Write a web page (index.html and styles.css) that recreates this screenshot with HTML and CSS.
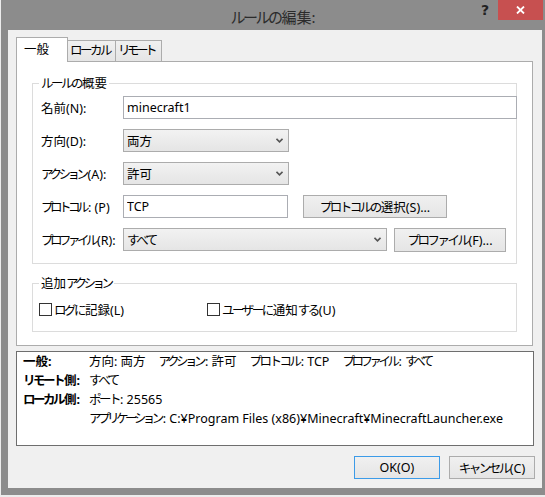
FILE: index.html
```html
<!DOCTYPE html>
<html lang="ja">
<head>
  <meta charset="UTF-8">
  <title>ルールの編集</title>
  <link rel="stylesheet" href="styles.css">
</head>
<body>
  <div class="window">
    <!-- タイトルバー -->
    <div class="titlebar">
      <div></div>
      <div class="title"><span class="k">ルールの</span>編集:</div>
      <div class="caption-buttons">
        <span class="help-btn">?</span>
        <span class="close-btn">
          <svg width="9" height="8" viewBox="0 0 9 8"><path d="M1 0.5 L8 7.5 M8 0.5 L1 7.5" stroke="#fff" stroke-width="1.8"/></svg>
        </span>
      </div>
    </div>

    <div class="client">
      <!-- タブ -->
      <div class="tabs">
        <div class="tab tab-active">一般</div>
        <div class="tab tab-local"><span class="k">ローカル</span></div>
        <div class="tab tab-remote"><span class="kt">リモート</span></div>
      </div>

      <div class="tab-panel">
        <!-- ルールの概要 -->
        <div class="group">
          <span class="group-title"><span class="k">ルールの</span>概要</span>
          <div class="rule-rows">
            <div class="row">
              <span class="row-label">名前(N):</span>
              <input class="field field-name" type="text" value="minecraft1">
            </div>
            <div class="row">
              <span class="row-label">方向(D):</span>
              <div class="combo combo-short">
                <span>両方</span>
                <svg width="7" height="5" viewBox="0 0 7 5"><path d="M0.5 0.8 L3.5 3.8 L6.5 0.8" fill="none" stroke="#555" stroke-width="1.6"/></svg>
              </div>
            </div>
            <div class="row">
              <span class="row-label"><span class="kt">アクション</span>(A):</span>
              <div class="combo combo-short">
                <span>許可</span>
                <svg width="7" height="5" viewBox="0 0 7 5"><path d="M0.5 0.8 L3.5 3.8 L6.5 0.8" fill="none" stroke="#555" stroke-width="1.6"/></svg>
              </div>
            </div>
            <div class="row">
              <span class="row-label"><span class="kt">プロトコル</span>: (P)</span>
              <input class="field field-protocol" type="text" value="TCP">
              <button class="btn btn-protocol"><span class="k">プロトコルの</span>選択(S)...</button>
            </div>
            <div class="row">
              <span class="row-label"><span class="kt">プロファイル</span>(R):</span>
              <div class="combo combo-profile">
                <span class="k">すべて</span>
                <svg width="7" height="5" viewBox="0 0 7 5"><path d="M0.5 0.8 L3.5 3.8 L6.5 0.8" fill="none" stroke="#555" stroke-width="1.6"/></svg>
              </div>
              <button class="btn btn-profile"><span class="k">プロファイル</span>(F)...</button>
            </div>
          </div>
        </div>

        <!-- 追加アクション -->
        <div class="group">
          <span class="group-title">追加<span class="kt">アクション</span></span>
          <div class="checks">
            <label class="check check-log"><span class="check-box"></span><span><span class="k">ログに</span>記録(L)</span></label>
            <label class="check"><span class="check-box"></span><span><span class="k">ユーザーに</span>通知<span class="k">する</span>(U)</span></label>
          </div>
        </div>
      </div>

      <!-- 概要 -->
      <div class="summary">
        <span class="summary-label">一般:</span>
        <span class="summary-items">
          <span>方向: 両方</span>
          <span><span class="kt">アクション</span>: 許可</span>
          <span><span class="k">プロトコル</span>: TCP</span>
          <span><span class="kt">プロファイル</span>: <span class="kt">すべて</span></span>
        </span>
        <span class="summary-label"><span class="k">リモート</span>側:</span>
        <span class="k">すべて</span>
        <span class="summary-label"><span class="k">ローカル</span>側:</span>
        <span><span class="k">ポート</span>: 25565</span>
        <span></span>
        <span><span class="kt">アプリケーション</span>: C:¥Program Files (x86)¥Minecraft¥MinecraftLauncher.exe</span>
      </div>

      <div class="dialog-buttons">
        <button class="btn btn-ok">OK(O)</button>
        <button class="btn btn-cancel"><span class="k">キャンセル</span>(C)</button>
      </div>
    </div>
  </div>
</body>
</html>
```

FILE: styles.css
```css
* {
  margin: 0;
  padding: 0;
  box-sizing: border-box;
}

body {
  width: 545px;
  height: 497px;
  overflow: hidden;
  background: #ececec;
  font-family: "Noto Sans", "Noto Sans CJK JP", sans-serif;
  font-size: 12.5px;
  white-space: nowrap;
  color: #000;
}

/* かなを詰めて組む */
.k {
  letter-spacing: -2.5px;
  margin-right: 1px;
}

.kt {
  letter-spacing: -3.5px;
  margin-right: 2px;
}

.window {
  margin-left: 1px;
  width: 544px;
  height: 495px;
  background: #8c8c8c;
  display: flex;
  flex-direction: column;
}

/* タイトルバー */
.titlebar {
  height: 30px;
  flex-shrink: 0;
  display: grid;
  grid-template-columns: 1fr auto 1fr;
}

.title {
  margin-top: 6px;
  height: 22px;
  line-height: 22px;
  font-size: 15px;
  color: #2b2b2b;
}

.caption-buttons {
  display: flex;
  justify-content: flex-end;
  align-items: flex-start;
  padding-right: 2px;
}

.help-btn {
  width: 26px;
  height: 20px;
  text-align: center;
  font: bold 14px/20px "DejaVu Sans", sans-serif;
  color: #222;
}

.close-btn {
  width: 45px;
  height: 20px;
  background: #c75050;
  display: flex;
  align-items: center;
  justify-content: center;
}

.client {
  flex: 1;
  margin: 0 3px 7px 7px;
  padding: 7px 0 0 8px;
  background: #f0f0f0;
}

/* タブ */
.tabs {
  display: flex;
  align-items: flex-end;
  height: 24px;
}

.tab {
  height: 21px;
  margin-left: -1px;
  padding-left: 2px;
  border: 1px solid #acacac;
  border-bottom: none;
  background: linear-gradient(#f0f0f0, #e5e5e5);
  line-height: 19px;
  overflow: hidden;
}

.tab-active {
  width: 52px;
  height: 25px;
  margin-left: 0;
  margin-bottom: -1px;
  padding-left: 7px;
  background: #fff;
  line-height: 23px;
  position: relative;
  z-index: 1;
}

.tab-local {
  width: 49px;
}

.tab-remote {
  width: 47px;
}

.tab-panel {
  width: 517px;
  height: 285px;
  padding: 21px 15px 0;
  border: 1px solid #acacac;
  background: #fff;
}

/* グループ枠 */
.group {
  border: 1px solid #dcdcdc;
}

.group + .group {
  margin-top: 19px;
}

.group-title {
  display: block;
  width: fit-content;
  margin: -8px 0 0 6px;
  padding: 0 2px;
  background: #fff;
  line-height: 16px;
}

.rule-rows {
  display: flex;
  flex-direction: column;
  gap: 10px;
  padding: 4px 0 12px 8px;
}

.row {
  display: flex;
  align-items: center;
  height: 23px;
}

.row-label {
  width: 82px;
  flex-shrink: 0;
}

.field {
  height: 23px;
  flex-shrink: 0;
  padding: 0 3px;
  border: 1px solid #abadb3;
  background: #fff;
  font: inherit;
  color: #000;
  outline: none;
}

.field-name {
  width: 394px;
}

.field-protocol {
  width: 165px;
}

.combo {
  height: 23px;
  flex-shrink: 0;
  display: flex;
  align-items: center;
  justify-content: space-between;
  padding: 0 5px 0 3px;
  border: 1px solid #acacac;
  background: linear-gradient(#f2f2f2, #e5e5e5);
}

.combo-short {
  width: 166px;
}

.combo-profile {
  width: 264px;
}

.btn {
  height: 23px;
  flex-shrink: 0;
  border: 1px solid #acacac;
  background: linear-gradient(#f0f0f0, #e5e5e5);
  font: inherit;
  color: #000;
}

.btn-protocol {
  width: 144px;
  margin-left: 15px;
}

.btn-profile {
  width: 112px;
  margin-left: 7px;
  height: 24px;
}

.checks {
  display: flex;
  height: 16px;
  margin-top: 9px;
  margin-bottom: 14px;
  padding-left: 6px;
}

.check {
  display: flex;
  align-items: center;
  gap: 2px;
}

.check-log {
  width: 168px;
}

.check-box {
  width: 13px;
  height: 13px;
  border: 1px solid #333;
  background: #fff;
}

/* 概要欄 */
.summary {
  width: 518px;
  height: 95px;
  margin-top: 5px;
  padding-left: 6px;
  border: 1px solid #6e6e6e;
  background: #fff;
  display: grid;
  grid-template-columns: 66px 1fr;
  grid-auto-rows: 19px;
  align-content: start;
  line-height: 19px;
}

.summary-label {
  font-weight: bold;
}

.summary-items {
  display: flex;
  gap: 13px;
}

.dialog-buttons {
  display: flex;
  justify-content: flex-end;
  gap: 9px;
  margin-top: 10px;
  padding-right: 7px;
}

.btn-ok,
.btn-cancel {
  width: 86px;
}

.btn-ok {
  border-color: #3c9be8;
}
```
